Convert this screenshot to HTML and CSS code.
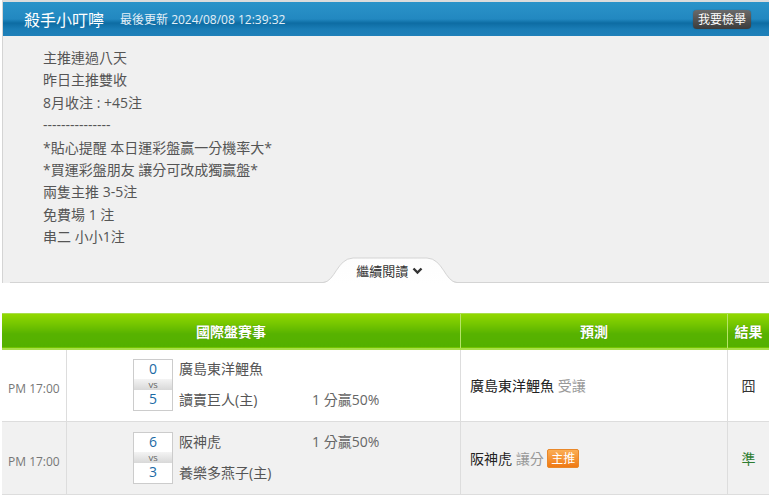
FILE: index.html
```html
<!DOCTYPE html>
<html lang="zh-Hant">
  <head>
    <meta charset="UTF-8" />
    <meta name="viewport" content="width=device-width, initial-scale=1.0" />
    <title>殺手小叮嚀</title>
    <link rel="stylesheet" href="styles.css">
  </head>
  <body>
    <div class="wrap">
      <div class="notice">
        <div class="notice-head">
          <h2 class="notice-title">殺手小叮嚀</h2>
          <span class="notice-time">最後更新 2024/08/08 12:39:32</span>
          <a href="#" class="report-btn">我要檢舉</a>
        </div>
        <div class="notice-body">
          <p>主推連過八天</p>
          <p>昨日主推雙收</p>
          <p>8月收注 : +45注</p>
          <p>---------------</p>
          <p>*貼心提醒 本日運彩盤贏一分機率大*</p>
          <p>*買運彩盤朋友 讓分可改成獨贏盤*</p>
          <p>兩隻主推 3-5注</p>
          <p>免費場 1 注</p>
          <p>串二 小小1注</p>
        </div>
        <div class="more-row">
          <a href="#" class="more-tab">
            <svg class="tab-bg" width="134" height="26" viewBox="0 0 134 26">
              <defs>
                <linearGradient id="tabfill" x1="0" y1="0" x2="0" y2="1">
                  <stop offset="0" stop-color="#fdfdfd" />
                  <stop offset="1" stop-color="#ffffff" />
                </linearGradient>
              </defs>
              <path d="M0 26 C 12 25, 14 1.5, 30 1 L 104 1 C 120 1.5, 122 25, 134 26 Z" fill="url(#tabfill)" />
              <path d="M0 25.5 C 12 25, 14 1.5, 30 1 L 104 1 C 120 1.5, 122 25, 134 25.5" fill="none" stroke="#d4d4d4" stroke-width="1" />
            </svg>
            <span class="tab-text">繼續閱讀
              <svg width="11" height="8" viewBox="0 0 11 8"><path d="M1.5 1.5 L5.5 5.5 L9.5 1.5" fill="none" stroke="#333" stroke-width="2.4" /></svg>
            </span>
          </a>
        </div>
      </div>

      <table class="games">
        <thead>
          <tr>
            <th colspan="2">國際盤賽事</th>
            <th class="col-pred">預測</th>
            <th class="col-res">結果</th>
          </tr>
        </thead>
        <tbody>
          <tr>
            <td class="col-time">PM 17:00</td>
            <td class="col-match">
              <div class="match">
                <div class="score score-top">0</div>
                <div class="team">廣島東洋鯉魚</div>
                <div class="odds"></div>
                <div class="vs">VS</div>
                <div></div>
                <div></div>
                <div class="score score-bottom">5</div>
                <div class="team">讀賣巨人(主)</div>
                <div class="odds">1 分贏50%</div>
              </div>
            </td>
            <td class="pred">廣島東洋鯉魚 <span class="pick">受讓</span></td>
            <td class="res">囧</td>
          </tr>
          <tr class="alt">
            <td class="col-time">PM 17:00</td>
            <td class="col-match">
              <div class="match">
                <div class="score score-top">6</div>
                <div class="team">阪神虎</div>
                <div class="odds">1 分贏50%</div>
                <div class="vs">VS</div>
                <div></div>
                <div></div>
                <div class="score score-bottom">3</div>
                <div class="team">養樂多燕子(主)</div>
                <div class="odds"></div>
              </div>
            </td>
            <td class="pred">阪神虎 <span class="pick">讓分</span> <span class="badge">主推</span></td>
            <td class="res win">準</td>
          </tr>
        </tbody>
      </table>
    </div>
  </body>
</html>
```

FILE: styles.css
```css
body {
  margin: 0;
  padding: 0;
  background: #fff;
  font-family: "Open Sans", "Noto Sans CJK TC", sans-serif;
  color: #555;
}
.wrap {
  width: 767px;
  padding: 0 0 0 2px;
}
.notice {
  border-top: 2px solid #dcdcdc;
  border-left: 1px solid #d4d4d4;
  background: #f0f0f0;
}
.notice-head {
  height: 34px;
  display: flex;
  align-items: center;
  padding: 0 18px 0 21px;
  background: linear-gradient(#2b93c9 0%, #2288c0 50%, #0d6ca3 62%, #1a7db6 80%, #1f80b9 100%);
}
.notice-title {
  margin: 0;
  font-size: 16px;
  font-weight: normal;
  color: #fff;
}
.notice-time {
  margin-left: 16px;
  font-size: 12px;
  color: #e3eff7;
}
.report-btn {
  margin-left: auto;
  padding: 0 5px;
  height: 19px;
  line-height: 19px;
  font-size: 12px;
  color: #fff;
  text-decoration: none;
  border-radius: 4px;
  background: linear-gradient(#6a6a6a, #3c3c3c);
  box-shadow: 0 0 1px rgba(0, 0, 0, 0.5);
}
.notice-body {
  padding: 11px 0 0 40px;
  font-size: 14px;
  line-height: 22.4px;
  color: #555;
}
.notice-body p {
  margin: 0;
}
.more-row {
  display: flex;
  justify-content: center;
  padding-top: 8px;
  margin-left: 7px;
  border-bottom: 1px solid #d4d4d4;
}
.more-tab {
  position: relative;
  display: block;
  width: 134px;
  height: 26px;
  margin-bottom: -1px;
  text-decoration: none;
}
.tab-bg {
  position: absolute;
  left: 0;
  top: 0;
}
.tab-text {
  position: relative;
  display: block;
  text-align: center;
  padding-top: 5px;
  font-size: 13px;
  line-height: 18px;
  color: #333;
}
.tab-text svg {
  vertical-align: 1px;
}
.games {
  width: 767px;
  margin-top: 30px;
  border-collapse: collapse;
  font-size: 14px;
}
.games th {
  height: 34px;
  padding: 0;
  color: #fff;
  font-size: 14px;
  font-weight: bold;
  text-shadow: 0 0 1px rgba(0, 0, 0, 0.3);
  background: linear-gradient(#93d900 0%, #6cc000 40%, #57b200 60%, #54b000 100%);
  border-top: 1px solid #a9de4a;
  border-bottom: 2px solid #a9e04a;
}
.games th + th {
  border-left: 1px solid #b6e468;
}
.col-pred {
  width: 266px;
}
.col-res {
  width: 41px;
}
.games tbody tr {
  height: 73px;
}
.games td {
  padding: 0;
  border-bottom: 1px solid #ddd;
  border-left: 1px solid #ddd;
}
.games td:first-child {
  border-left: none;
}
.games tr.alt td {
  background: #f1f1f1;
}
.games td.col-time {
  width: 58px;
  padding: 7px 0 0 6px;
  font-size: 12px;
  color: #777;
}
.games td.col-match {
  padding-left: 66px;
}
.match {
  display: grid;
  grid-template-columns: 40px 139px 120px;
  grid-template-rows: 20px 11px 21px;
}
.score {
  border: 1px solid #ccc;
  background: #fff;
  color: #1b6aa5;
  text-align: center;
  font-size: 14px;
  line-height: 18px;
}
.score-top {
  border-bottom: none;
}
.score-bottom {
  border-top: none;
}
.vs {
  border-left: 1px solid #ccc;
  border-right: 1px solid #ccc;
  background: linear-gradient(#f4f4f4, #d8d8d8);
  font-size: 8px;
  line-height: 11px;
  text-align: center;
  color: #555;
  overflow: hidden;
}
.team {
  padding-left: 6px;
  line-height: 20px;
  color: #555;
  white-space: nowrap;
}
.odds {
  line-height: 20px;
  color: #666;
  white-space: nowrap;
}
.games td.pred {
  padding-left: 9px;
  color: #222;
}
.pick {
  color: #999;
}
.badge {
  display: inline-block;
  padding: 0 3px;
  height: 17px;
  line-height: 17px;
  font-size: 12px;
  color: #fff;
  border: 1px solid #e9882a;
  border-radius: 2px;
  background: linear-gradient(#fbae55, #ef7914);
  vertical-align: 1px;
}
.res {
  text-align: center;
  color: #333;
}
.res.win {
  color: #2e7d32;
}
```
